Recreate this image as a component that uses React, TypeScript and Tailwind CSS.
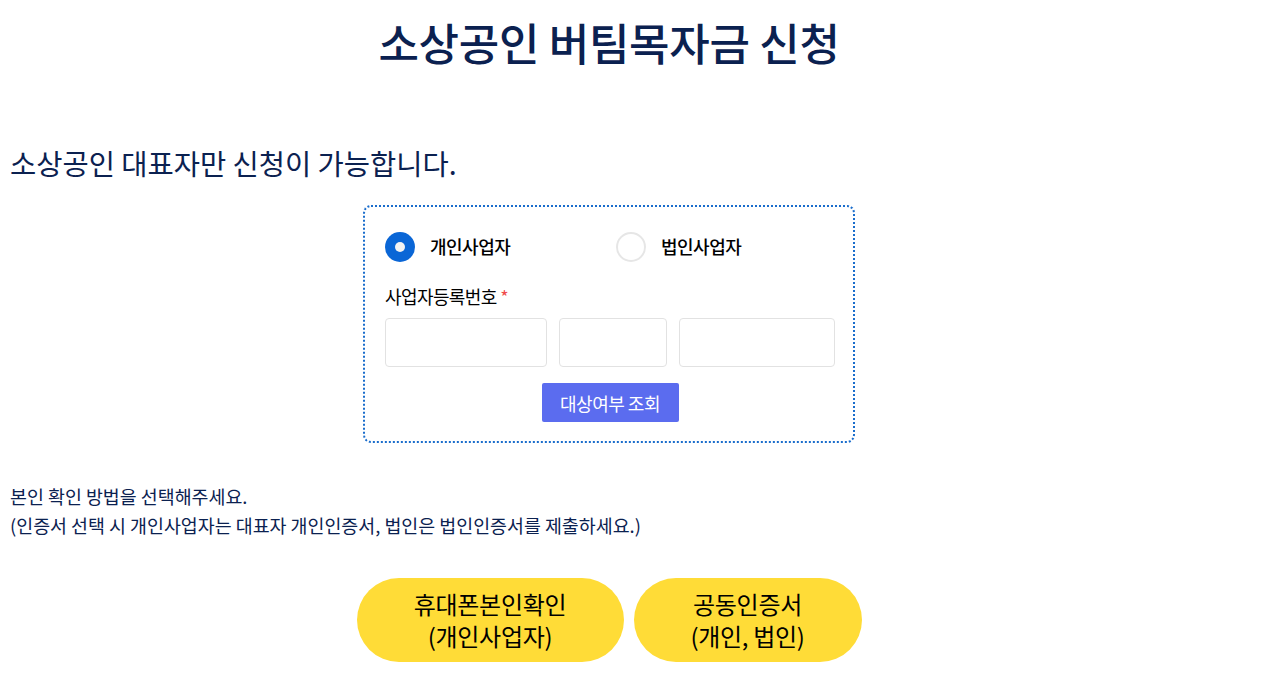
import React, { useState } from 'react';

const App: React.FC = () => {
  const [bizType, setBizType] = useState<'personal' | 'corp'>('personal');

  return (
    <div className="w-[1218px] bg-white font-['Noto_Sans_CJK_KR','Noto_Sans',sans-serif] text-[#0b2150]">
      <h1 className="pt-[12px] text-center text-[44px] font-medium leading-[60px] tracking-[-0.3px]">
        소상공인 버팀목자금 신청
      </h1>

      <p className="mt-[73px] px-[10px] text-[28.5px] leading-[36px]">
        소상공인 대표자만 신청이 가능합니다.
      </p>

      {/* 사업자 구분 / 등록번호 */}
      <div className="mx-auto mt-[24px] w-[492px] rounded-lg border-2 border-dotted border-[#1a6dcc] pb-[19px] pl-[20px] pr-[18px] pt-[25px] text-black">
        <div className="flex items-center">
          {[
            { key: 'personal', label: '개인사업자', w: 'w-[231px]' },
            { key: 'corp', label: '법인사업자', w: '' },
          ].map((opt) => (
            <label
              key={opt.key}
              onClick={() => setBizType(opt.key as 'personal' | 'corp')}
              className={`flex cursor-pointer items-center gap-[15px] ${opt.w}`}
            >
              {bizType === opt.key ? (
                <span className="flex h-[30px] w-[30px] items-center justify-center rounded-full bg-[#0a66d6]">
                  <span className="h-[10px] w-[10px] rounded-full bg-[#f3f3f3]" />
                </span>
              ) : (
                <span className="h-[30px] w-[30px] rounded-full border-2 border-[#e6e6e6] bg-white" />
              )}
              <span className="-mt-[3px] text-[18px] font-medium leading-[24px] tracking-[-0.5px]">{opt.label}</span>
            </label>
          ))}
        </div>

        <div className="mt-[22px] text-[18px] leading-[24px] tracking-[-0.6px]">
          사업자등록번호 <span className="text-[#f04a4a]">*</span>
        </div>

        <div className="mt-[10px] flex gap-[12px]">
          <input className="h-[49px] w-[162px] rounded border border-[#e2e2e2] outline-none" />
          <input className="h-[49px] w-[108px] rounded border border-[#e2e2e2] outline-none" />
          <input className="h-[49px] w-[156px] rounded border border-[#e2e2e2] outline-none" />
        </div>

        <div className="mt-[16px] flex justify-center">
          <button className="h-[39px] w-[137px] rounded-[2px] bg-[#5b6cef] text-[18px] leading-[24px] tracking-[-0.5px] text-white">
            대상여부 조회
          </button>
        </div>
      </div>

      <div className="mt-[39px] px-[10px] text-[18.4px] leading-[29px]">
        <p>본인 확인 방법을 선택해주세요.</p>
        <p>(인증서 선택 시 개인사업자는 대표자 개인인증서, 법인은 법인인증서를 제출하세요.)</p>
      </div>

      <div className="mt-[38px] flex justify-center gap-[10px] pb-[38px]">
        <button className="h-[84px] w-[267px] rounded-full bg-[#ffdc37] text-[24px] leading-[32px] tracking-[-0.3px] text-black">
          휴대폰본인확인
          <br />
          (개인사업자)
        </button>
        <button className="h-[84px] w-[228px] rounded-full bg-[#ffdc37] text-[24px] leading-[32px] tracking-[-0.3px] text-black">
          공동인증서
          <br />
          (개인, 법인)
        </button>
      </div>
    </div>
  );
};

export default App;
